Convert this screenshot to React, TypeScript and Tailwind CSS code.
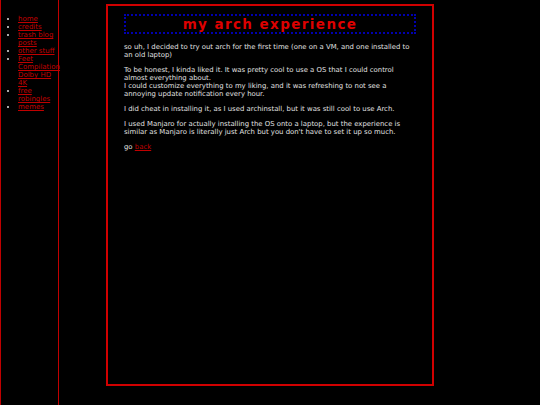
const links = [
  "home",
  "credits",
  "trash blog posts",
  "other stuff",
  "Feet Compilation Dolby HD 4K",
  "free robingles",
  "memes",
];

export default function App() {
  return (
    <div
      className="flex h-[405px] w-[540px] overflow-hidden bg-black text-[#e0e0e0]"
      style={{ fontFamily: '"DejaVu Sans", Verdana, sans-serif' }}
    >
      <nav className="h-full w-[59px] shrink-0 border-x border-[#c00000]">
        <ul className="mt-[15px] list-disc pl-[17px] text-[7px] leading-[8px] text-[#e0e0e0]">
          {links.map((l) => (
            <li key={l} className="marker:text-[6px]">
              <a href="#" className="text-[#c00000] underline">
                {l}
              </a>
            </li>
          ))}
        </ul>
      </nav>

      <main className="ml-[47px] mt-[4px] h-[382px] w-[328px] shrink-0 border-2 border-[#d00000] px-[16px] pt-[8px]">
        <h1 className="flex h-[20px] items-center justify-center border-2 border-dotted border-[#0000b0] text-[13.5px] font-bold tracking-[1.4px] text-[#dd0000]">
          my arch experience
        </h1>
        <div className="mt-[9px] space-y-[7px] text-[6.9px] leading-[8px]">
          <p>
            so uh, I decided to try out arch for the first time (one on a VM, and one installed to an
            old laptop)
          </p>
          <p>
            To be honest, I kinda liked it. It was pretty cool to use a OS that I could control almost
            everything about.
            <br />I could customize everything to my liking, and it was refreshing to not see a
            annoying update notification every hour.
          </p>
          <p>I did cheat in installing it, as I used archinstall, but it was still cool to use Arch.</p>
          <p>
            I used Manjaro for actually installing the OS onto a laptop, but the experience is similar
            as Manjaro is literally just Arch but you don't have to set it up so much.
          </p>
          <p>
            go{" "}
            <a href="#" className="text-[#c00000] underline">
              back
            </a>
          </p>
        </div>
      </main>
    </div>
  );
}
